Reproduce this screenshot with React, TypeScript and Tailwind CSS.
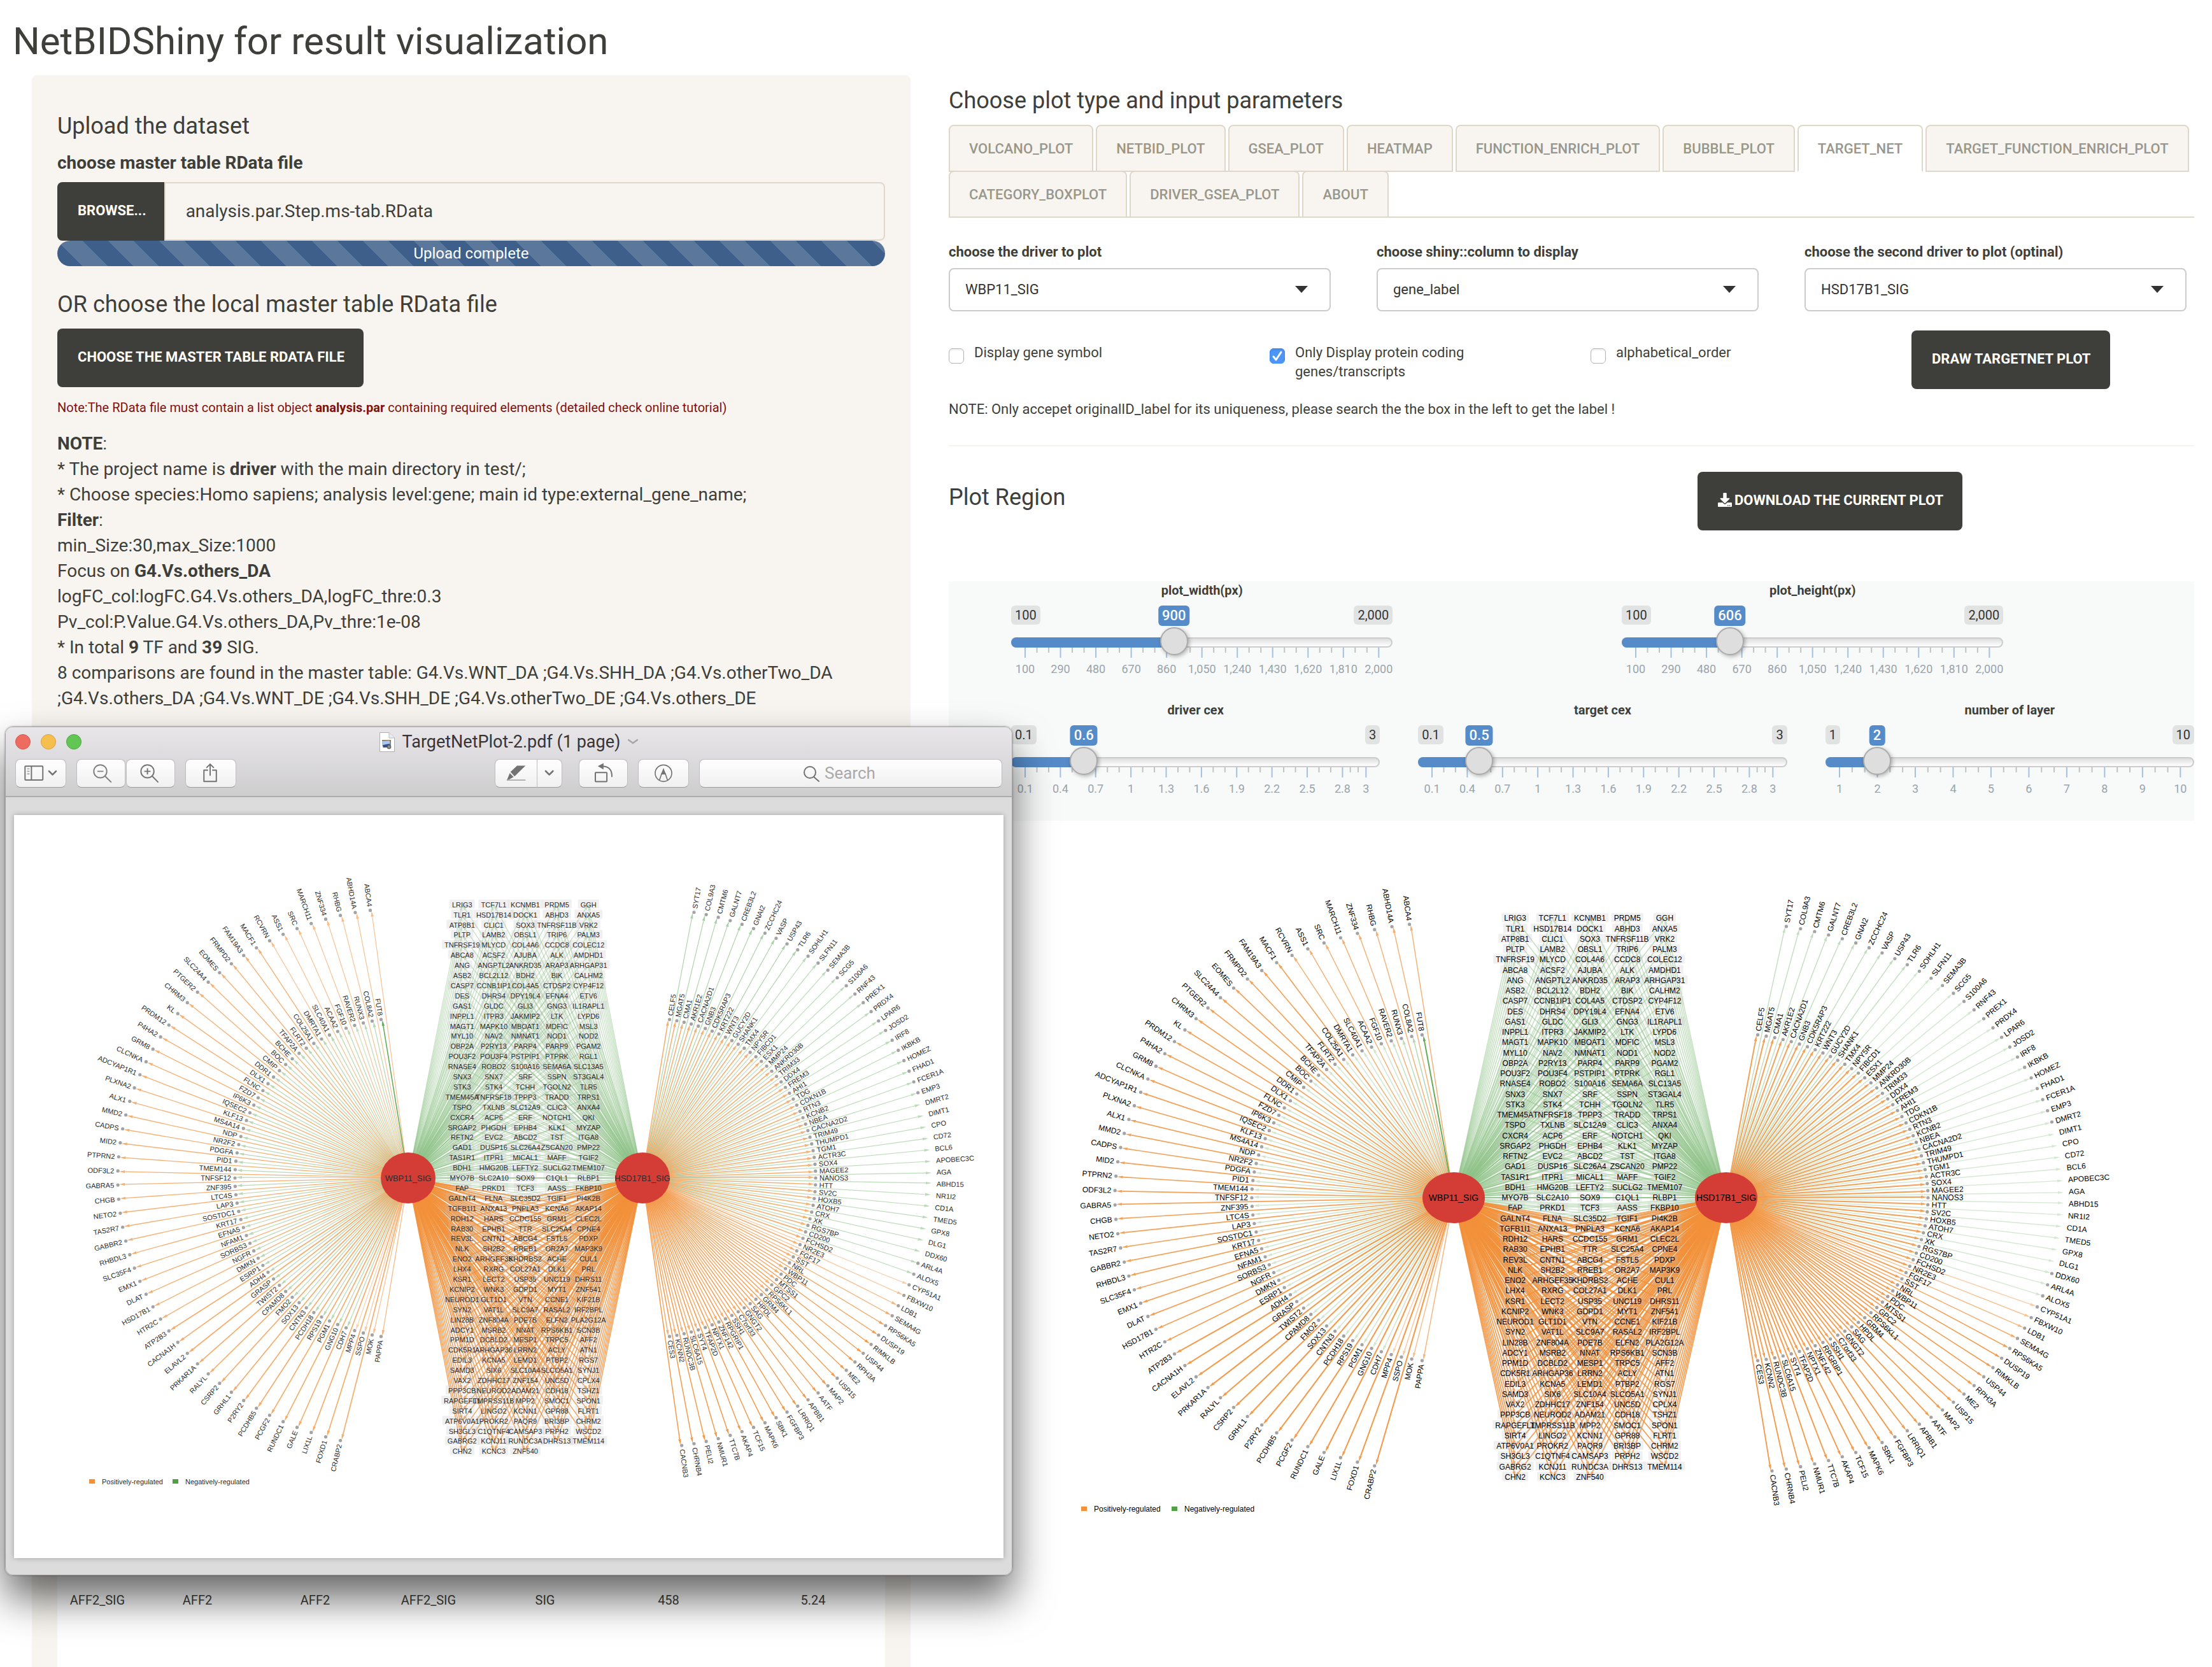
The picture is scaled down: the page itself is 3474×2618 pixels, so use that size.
import React from "react";
import { FaDownload } from "react-icons/fa";

/* ------------------------------------------------------------------ */
/* Network data                                                        */
/* ------------------------------------------------------------------ */

const leftOuter =
  "ABCA4 ABHD14A RHBG ZNF334 MARCH11 SRC ASS1 RCVRN MACF1 FAM19A3 FRMPD2 EOMES SLC24A4 PTGER2 CHRM3 KL PRDM12 P4HA2 GRM8 CLCNKA ADCYAP1R1 PLXNA2 ALX1 MMD2 CADPS MID2 PTPRN2 ODF3L2 GABRA5 CHGB NETO2 TAS2R7 GABBR2 RHBDL3 SLC35F4 EMX1 DLAT HSD17B1 HTR2C ATP2B3 CACNA1H ELAVL2 PRKAR1A RALYL CSRP2 GRHL1 P2RY2 PCDHB5 PCGF2 RUNDC1 GALE LIX1L FOXD1 CRABP2".split(" ");
const leftInner =
  "FUT8 COL8A2 RUNX3 RAVER2 FGF10 ACAA2 SLC40A1 DMRTA1 COL25A1 FLRT2 TFAP2A BCHE BOC CMIP DDR1 DLX1 FLNC FZD7 IP6K3 IQSEC2 KLF13 MS4A14 NDP NR2F2 PDGFA PID1 TMEM144 TNFSF12 ZNF395 LTC4S LAP3 SOSTDC1 KRT17 EFNA5 NFAM1 SORBS3 NGFR DMKN ESRP1 ADH4 GRASP TWIST2 CPAMD8 FMO2 SOX13 CNTN3 PCDH18 RPS19 PGM1 GNG10 CDH7 MPP4 SSPO MOK PAPPA".split(" ");
const rightInner =
  "CELF5 MGAT5 CMA1 AKR1E2 CACNA2D1 GNB3 CDK5RAP3 KRT222 WNT3 GUCY2D SHANK1 TMX4 NPY5R FIBCD1 ESX1 MMP24 ANKRD30B TRIM33 DDX4 FREM3 AHI1 TDG CDKN1B RTN3 KCNB2 NBEA CACNA2D2 TRIM49 THUMPD1 TGM1 ACTR3C SOX4 MAGEE2 NANOS3 HTT SV2C HOXB5 ATOH7 CRX XK RGS7BP CD200 FCHSD2 NR2E3 FGF17 SST NRL WBP11 PDC MTSS1 GPC2 RPS6KL1 GRM4 HPDL SAG GNGT2 C7orf33 SSH1 RPGRIP1 ZNF142 NPTX1 TFAP2D SYT4 SLC6A15 RUNDC3B KCNN2 CES3".split(" ");
const rightOuter =
  "SYT17 COL9A3 CMTM6 GALNT7 CREB3L2 GNAI2 ZCCHC24 VASP USP43 TLR6 SOHLH1 SLFN11 SEMA3B SCG5 S100A6 RNF43 PREX1 PRDX4 LPAR6 JOSD2 IRF8 IKBKB HOMEZ FHAD1 FCER1A EMP3 DMRT2 DIMT1 CPO CD72 BCL6 APOBEC3C AGA ABHD15 NR1I2 CD1A TMED5 GPX8 DLG1 DDX60 ARL4A ALOX5 CYP51A1 FBXW10 LDB1 SEMA4G RPS6KA5 DUSP19 RIMKLB USP44 RPH3A ME2 USP15 MAP2 AATF APBB1 LRRIQ1 FGFBP3 SBK1 MAPK6 TCF15 AKAP4 TTC7B NMUR1 PELI2 CHRNB4 CACNB3".split(" ");

const sharedRows = [
  "LRIG3 TCF7L1 KCNMB1 PRDM5 GGH",
  "TLR1 HSD17B14 DOCK1 ABHD3 ANXA5",
  "ATP8B1 CLIC1 SOX3 TNFRSF11B VRK2",
  "PLTP LAMB2 OBSL1 TRIP6 PALM3",
  "TNFRSF19 MLYCD COL4A6 CCDC8 COLEC12",
  "ABCA8 ACSF2 AJUBA ALK AMDHD1",
  "ANG ANGPTL2 ANKRD35 ARAP3 ARHGAP31",
  "ASB2 BCL2L12 BDH2 BIK CALHM2",
  "CASP7 CCNB1IP1 COL4A5 CTDSP2 CYP4F12",
  "DES DHRS4 DPY19L4 EFNA4 ETV6",
  "GAS1 GLDC GLI3 GNG3 IL1RAPL1",
  "INPPL1 ITPR3 JAKMIP2 LTK LYPD6",
  "MAGT1 MAPK10 MBOAT1 MDFIC MSL3",
  "MYL10 NAV2 NMNAT1 NOD1 NOD2",
  "OBP2A P2RY13 PARP4 PARP9 PGAM2",
  "POU3F2 POU3F4 PSTPIP1 PTPRK RGL1",
  "RNASE4 ROBO2 S100A16 SEMA6A SLC13A5",
  "SNX3 SNX7 SRF SSPN ST3GAL4",
  "STK3 STK4 TCHH TGOLN2 TLR5",
  "TMEM45A TNFRSF18 TPPP3 TRADD TRPS1",
  "TSPO TXLNB SLC12A9 CLIC3 ANXA4",
  "CXCR4 ACP6 ERF NOTCH1 QKI",
  "SRGAP2 PHGDH EPHB4 KLK1 MYZAP",
  "RFTN2 EVC2 ABCD2 TST ITGA8",
  "GAD1 DUSP16 SLC26A4 ZSCAN20 PMP22",
  "TAS1R1 ITPR1 MICAL1 MAFF TGIF2",
  "BDH1 HMG20B LEFTY2 SUCLG2 TMEM107",
  "MYO7B SLC2A10 SOX9 C1QL1 RLBP1",
  "FAP PRKD1 TCF3 AASS FKBP10",
  "GALNT4 FLNA SLC35D2 TGIF1 PI4K2B",
  "TGFB1I1 ANXA13 PNPLA3 KCNA6 AKAP14",
  "RDH12 HARS CCDC155 GRM1 CLEC2L",
  "RAB30 EPHB1 TTR SLC25A4 CPNE4",
  "REV3L CNTN1 ABCG4 FSTL5 PDXP",
  "NLK SH2B2 RREB1 OR2A7 MAP3K9",
  "ENO2 ARHGEF35 KHDRBS2 ACHE CUL1",
  "LHX4 RXRG COL27A1 DLK1 PRL",
  "KSR1 LECT2 USP35 UNC119 DHRS11",
  "KCNIP2 WNK3 GDPD1 MYT1 ZNF541",
  "NEUROD1 GLT1D1 VTN CCNE1 KIF21B",
  "SYN2 VAT1L SLC9A7 RASAL2 IRF2BPL",
  "LIN28B ZNF804A PDE7B ELFN2 PLA2G12A",
  "ADCY1 MSRB2 NNAT RPS6KB1 SCN3B",
  "PPM1D DCBLD2 MESP1 TRPC5 AFF2",
  "CDK5R1 ARHGAP36 LRRN2 ACLY ATN1",
  "EDIL3 KCNA5 LEMD1 PTBP2 RGS7",
  "SAMD3 SIX6 SLC10A4 SLCO5A1 SYNJ1",
  "VAX2 ZDHHC17 ZNF154 UNC5D CPLX4",
  "PPP3CB NEUROD2 ADAM21 CDH18 TSHZ1",
  "RAPGEFL1 TMPRSS11B MPP2 SMOC1 SPON1",
  "SIRT4 LINGO2 KCNN1 GPR88 FLRT1",
  "ATP6V0A1 PROKR2 PAQR9 BRI3BP CHRM2",
  "SH3GL3 C1QTNF4 CAMSAP3 PRPH2 WSCD2",
  "GABRG2 KCNJ11 RUNDC3A DHRS13 TMEM114",
  "CHN2 KCNC3 ZNF540",
].map((r) => r.split(" "));

/* ------------------------------------------------------------------ */
/* Target network chart                                                */
/* ------------------------------------------------------------------ */

type Geometry = {
  height: number;
  cx: number;
  cy: number;
  half: number;
  outer: [number, number];
  inner: [number, number];
  driver: [number, number];
  colStep: number;
  rowStep: number;
  font: number;
  driverFont: number;
  ink: string;
  stroke: number;
  ringAlpha: number;
  greenAlpha: number;
  hiddenDots: [number, number];
  legend: [number, number, number];
};

const ORANGE = "#f2913a";
const GREEN = "#8cc285";

const glyphWidth = (ch: string) => {
  if ("I".includes(ch)) return 0.278;
  if ("J".includes(ch)) return 0.5;
  if ("0123456789L".includes(ch)) return 0.556;
  if ("FTZ".includes(ch)) return 0.611;
  if ("ABEKPSVXY".includes(ch)) return 0.667;
  if ("CDHNRU".includes(ch)) return 0.722;
  if ("GOQ".includes(ch)) return 0.778;
  if ("M".includes(ch)) return 0.833;
  return 0.9;
};
const textWidth = (s: string, size: number) =>
  [...s].reduce((sum, ch) => sum + glyphWidth(ch), 0) * size;

function Edge(p: {
  x1: number;
  y1: number;
  x2: number;
  y2: number;
  color: string;
  width: number;
  alpha: number;
}) {
  const dx = p.x2 - p.x1;
  const dy = p.y2 - p.y1;
  const len = Math.hypot(dx, dy);
  const ux = dx / len;
  const uy = dy / len;
  const bx = p.x2 - ux * 9;
  const by = p.y2 - uy * 9;
  return (
    <g stroke={p.color} fill={p.color} opacity={p.alpha}>
      <line x1={p.x1} y1={p.y1} x2={bx} y2={by} strokeWidth={p.width} />
      <path
        stroke="none"
        d={`M${p.x2} ${p.y2}L${bx - uy * 2.2} ${by + ux * 2.2}L${bx + uy * 2.2} ${by - ux * 2.2}Z`}
      />
    </g>
  );
}

function TargetNet({ g, label }: { g: Geometry; label: string }) {
  const xl = g.cx - g.half;
  const xr = g.cx + g.half;
  const rad = Math.PI / 180;

  const ring = (
    names: string[],
    side: -1 | 1,
    radii: [number, number],
    start: number,
    step: number
  ) =>
    names.map((name, i) => {
      const t = start + step * i;
      const ox = side < 0 ? xl : xr;
      const x = ox + side * radii[0] * Math.sin(t * rad);
      const y = g.cy - radii[1] * Math.cos(t * rad);
      const tx = x + side * 6 * Math.sin(t * rad);
      const ty = y - 6 * Math.cos(t * rad);
      return { name, i, x, y, tx, ty, ox, side, rot: -side * (90 - t) };
    });

  const stepL = 162 / (leftInner.length - 1);
  const stepR = 162 / (rightInner.length - 1);
  const lo = ring(leftOuter, -1, g.outer, 9 - stepL / 2, stepL);
  const li = ring(leftInner, -1, g.inner, 9, stepL);
  const ri = ring(rightInner, 1, g.inner, 9, stepR);
  const ro = ring(rightOuter, 1, g.outer, 9 + stepR / 2, stepR);

  const cells = sharedRows.flatMap((row, r) =>
    row.map((name, c) => ({
      name,
      r,
      x: g.cx + (c - 2) * g.colStep,
      y: g.cy + (r - 27) * g.rowStep,
    }))
  );
  const shared = cells.flatMap((c) =>
    [xl, xr].map((ox) => {
      const slope = (c.y - g.cy) / Math.abs(c.x - ox);
      return { ...c, ox, green: slope < 0.16, faint: c.r > 27 };
    })
  );

  const ringEdge = (
    p: (typeof lo)[number],
    color: string,
    width: number,
    alpha: number
  ) => (
    <Edge
      key={p.name + p.i}
      x1={p.ox}
      y1={g.cy}
      x2={p.x - p.side * 2}
      y2={p.y + (p.y < g.cy ? 1 : -1)}
      color={color}
      width={width * g.stroke}
      alpha={alpha}
    />
  );

  return (
    <svg
      className="block w-full"
      style={{ height: g.height }}
      role="img"
      aria-label={label}
      fontFamily="'Liberation Sans', Arial, sans-serif"
    >
      <g>
        {li.map((p) =>
          p.i > 50
            ? ringEdge(p, ORANGE, 1.5, 0.3 + (p.i - 50) * 0.09)
            : p.i === 0
              ? ringEdge(p, "#55a54c", 2, 0.9)
              : ringEdge(p, "#7fbb78", 1.5, p.i < 4 ? 0.65 - p.i * 0.07 : g.greenAlpha)
        )}
        {ro.map((p) =>
          p.i < 42
            ? ringEdge(p, "#86bf80", 1.4, p.i < 10 ? g.greenAlpha + 0.15 : g.greenAlpha)
            : ringEdge(p, ORANGE, 1.4 + Math.min(0.5, (p.i - 42) * 0.03), Math.min(0.9, 0.45 + (p.i - 42) * 0.1))
        )}
        {lo.map((p) =>
          ringEdge(p, ORANGE, p.i > 38 ? 2.1 : p.i < 8 ? 1.4 : 1.7, p.i > 38 ? g.ringAlpha + 0.05 : g.ringAlpha - (p.i < 8 ? 0.12 : 0))
        )}
        {ri.map((p) => ringEdge(p, ORANGE, 2, g.ringAlpha))}
      </g>

      <g>
        {[...shared]
          .sort((a, b) => Number(b.green) - Number(a.green))
          .map((e, k) => (
            <Edge
              key={k}
              x1={e.ox}
              y1={g.cy}
              x2={e.x}
              y2={e.y}
              color={e.green ? GREEN : ORANGE}
              width={(e.green ? 1.5 : 1.8) * g.stroke}
              alpha={e.green ? (e.faint ? 0.35 : 0.5) : 0.85}
            />
          ))}
      </g>

      <g fill="#c0c0c0" fillOpacity="0.24">
        {cells.map((c) => {
          const w = textWidth(c.name, g.font) + 8;
          return (
            <rect key={c.name} x={c.x - w / 2} y={c.y - 8} width={w} height={14} />
          );
        })}
      </g>

      <g fill="#a3a3a3">
        {[...lo, ...li, ...ri].map((p) => (
          <circle key={p.name} cx={p.x} cy={p.y} r={2.6} />
        ))}
        {ro
          .filter((p) => p.i < g.hiddenDots[0] || p.i > g.hiddenDots[1])
          .map((p) => (
            <circle key={p.name} cx={p.x} cy={p.y} r={2.6} />
          ))}
      </g>

      <g fill="#d43d35">
        <ellipse cx={xl} cy={g.cy} rx={g.driver[0]} ry={g.driver[1]} />
        <ellipse cx={xr} cy={g.cy} rx={g.driver[0]} ry={g.driver[1]} />
      </g>

      <g fill={g.ink} fontSize={g.font}>
        {[...lo, ...li, ...ri, ...ro].map((p, k) => (
          <text
            key={k}
            textAnchor={p.side < 0 ? "end" : "start"}
            transform={`translate(${p.tx} ${p.ty}) rotate(${p.rot})`}
            y={4}
          >
            {p.name}
          </text>
        ))}
        {cells.map((c) => (
          <text key={c.name} x={c.x} y={c.y + 4} textAnchor="middle">
            {c.name}
          </text>
        ))}
        <rect x={g.legend[0]} y={g.legend[1] - 4} width={9} height={7} fill={ORANGE} />
        <text x={g.legend[0] + 20} y={g.legend[1] + 4}>
          Positively-regulated
        </text>
        <rect x={g.legend[2]} y={g.legend[1] - 4} width={9} height={7} fill="#52a046" />
        <text x={g.legend[2] + 20} y={g.legend[1] + 4}>
          Negatively-regulated
        </text>
      </g>
      <g fill={g.ink} fontSize={g.driverFont} textAnchor="middle">
        <text x={xl} y={g.cy + 5}>
          WBP11_SIG
        </text>
        <text x={xr} y={g.cy + 5}>
          HSD17B1_SIG
        </text>
      </g>
    </svg>
  );
}

const pageGeometry: Geometry = {
  height: 1200,
  cx: 1007,
  cy: 592,
  half: 214,
  outer: [532, 433],
  inner: [317, 259],
  driver: [49, 40],
  colStep: 58.7,
  rowStep: 16.25,
  font: 12,
  driverFont: 14,
  ink: "#000000",
  stroke: 1,
  ringAlpha: 0.85,
  greenAlpha: 0.35,
  hiddenDots: [27, 38],
  legend: [208, 1081, 350],
};

const pdfGeometry: Geometry = {
  height: 1167,
  cx: 803,
  cy: 570,
  half: 184,
  outer: [456, 424],
  inner: [272, 252],
  driver: [43, 40],
  colStep: 49.6,
  rowStep: 15.9,
  font: 11,
  driverFont: 13,
  ink: "#2c2c2c",
  stroke: 0.8,
  ringAlpha: 0.7,
  greenAlpha: 0.55,
  hiddenDots: [26, 39],
  legend: [118, 1047, 249],
};

/* ------------------------------------------------------------------ */
/* Form controls                                                       */
/* ------------------------------------------------------------------ */

function DarkButton({ children }: { children: React.ReactNode }) {
  return (
    <button
      type="button"
      className="inline-flex h-[92px] items-center gap-1 rounded-lg bg-[#3e3f3a] pr-[30px] pb-1 pl-8 text-[22px] font-bold whitespace-nowrap text-white uppercase"
    >
      {children}
    </button>
  );
}

function SelectField({ id, label, value }: { id: string; label: string; value: string }) {
  return (
    <div>
      <label htmlFor={id} className="mb-[9px] block text-[22px] leading-8 font-bold">
        {label}
      </label>
      <div className="relative">
        <select
          id={id}
          defaultValue={value}
          className="block h-[68px] w-full appearance-none rounded-lg border-2 border-[#cccccc] bg-white px-6 pb-0.5 text-[22px] text-[#333333]"
        >
          <option>{value}</option>
        </select>
        <svg
          className="pointer-events-none absolute top-7 right-9 h-[11px] w-5"
          viewBox="0 0 20 11"
          aria-hidden="true"
        >
          <path d="M0 0H20L10 11Z" fill="#333333" />
        </svg>
      </div>
    </div>
  );
}

function CheckField({ id, label, checked }: { id: string; label: string; checked?: boolean }) {
  return (
    <div className="mt-5 flex items-start gap-4">
      <span className="relative mt-2 block size-6 shrink-0">
        <input
          id={id}
          type="checkbox"
          defaultChecked={checked}
          className="peer block size-6 appearance-none rounded-md border border-[#b4b4b4] bg-white shadow-[inset_0_2px_2px_rgba(0,0,0,0.08)] checked:border-[#3f8cf5] checked:bg-[#4c96f8]"
        />
        <svg
          className="pointer-events-none absolute inset-0 hidden size-6 peer-checked:block"
          viewBox="0 0 24 24"
          aria-hidden="true"
        >
          <path
            d="M6 13L10 18L18 6"
            fill="none"
            stroke="white"
            strokeWidth="3"
            strokeLinecap="round"
            strokeLinejoin="round"
          />
        </svg>
      </span>
      <label htmlFor={id} className="text-[22px] leading-[30px]">
        {label}
      </label>
    </div>
  );
}

function SliderField(p: {
  id: string;
  label: string;
  min: number;
  max: number;
  value: number;
  step: number;
  ticks: number[];
}) {
  const pct = (v: number) => ((v - p.min) / (p.max - p.min)) * 100;
  const fmt = (v: number) => v.toLocaleString("en-US");
  const at = `calc(22px + (100% - 44px) * ${pct(p.value) / 100})`;
  const minor = p.ticks.slice(1).flatMap((t, i) => {
    const a = p.ticks[i];
    return [a + (t - a) / 3, a + ((t - a) * 2) / 3];
  });
  return (
    <div>
      <label htmlFor={p.id} className="block text-center text-[20px] leading-7 font-bold">
        {p.label}
      </label>
      <div className="relative mt-2.5 flex h-[34px] items-start justify-between text-[20px] text-[#333333]">
        <span className="rounded-md bg-[#e1e3e2] px-1.5 leading-[30px]">{fmt(p.min)}</span>
        <span className="rounded-md bg-[#e1e3e2] px-1.5 leading-[30px]">{fmt(p.max)}</span>
        <output
          htmlFor={p.id}
          className="absolute top-0 -translate-x-1/2 rounded-md bg-[#548bc8] px-1.5 text-[22px] leading-8 font-medium text-white"
          style={{ left: at }}
        >
          {fmt(p.value)}
        </output>
      </div>
      <div className="relative h-11 pt-4">
        <div className="h-4 overflow-hidden rounded-lg border-2 border-[#cccccc] bg-linear-to-b from-[#dedede] to-white" />
        <div
          className="absolute top-4 left-0 h-4 rounded-l-lg bg-[#548bc8]"
          style={{ width: at }}
        />
        <input
          id={p.id}
          type="range"
          min={p.min}
          max={p.max}
          step={p.step}
          defaultValue={p.value}
          className="absolute inset-0 block h-11 w-full appearance-none bg-transparent [&::-webkit-slider-thumb]:size-11 [&::-webkit-slider-thumb]:appearance-none [&::-webkit-slider-thumb]:rounded-full [&::-webkit-slider-thumb]:border-2 [&::-webkit-slider-thumb]:border-[#ababab] [&::-webkit-slider-thumb]:bg-[#dedede] [&::-webkit-slider-thumb]:shadow-[2px_2px_6px_rgba(0,0,0,0.3)]"
        />
      </div>
      <div className="-mt-3 px-[22px]">
        <svg className="block h-12 w-full overflow-visible text-[18px]" aria-hidden="true">
          {minor.map((v) => (
            <line key={v} x1={`${pct(v)}%`} x2={`${pct(v)}%`} y1="0" y2="8" stroke="#bfc3c5" strokeWidth="2" />
          ))}
          {p.ticks.map((v) => (
            <line key={v} x1={`${pct(v)}%`} x2={`${pct(v)}%`} y1="0" y2="16" stroke="#a3c1e0" strokeWidth="2" />
          ))}
          {p.ticks.map((v) => (
            <text key={v} x={`${pct(v)}%`} y="40" textAnchor="middle" fill="#99a4ac">
              {fmt(v)}
            </text>
          ))}
        </svg>
      </div>
    </div>
  );
}

/* ------------------------------------------------------------------ */
/* Left panel                                                          */
/* ------------------------------------------------------------------ */

function UploadPanel() {
  return (
    <section className="flex flex-col rounded-t-lg bg-[#f8f5f0] px-10 pt-[60px]">
      <h2 className="text-[36px] leading-10">Upload the dataset</h2>
      <label htmlFor="file-name" className="mt-[18px] mb-2.5 text-[28px] leading-10 font-bold">
        choose master table RData file
      </label>
      <div className="flex h-[92px]">
        <button
          type="button"
          className="rounded-l-lg bg-[#3e3f3a] pr-7 pb-1 pl-8 text-[22px] font-bold text-white uppercase"
        >
          Browse...
        </button>
        <input
          id="file-name"
          type="text"
          readOnly
          value="analysis.par.Step.ms-tab.RData"
          className="min-w-0 grow rounded-r-lg border-2 border-[#dfd7ca] bg-transparent px-8 text-[28px]"
        />
      </div>
      <div className="h-10 rounded-full bg-[#3e5f8a] bg-[linear-gradient(45deg,rgba(255,255,255,0.15)_25%,transparent_25%,transparent_50%,rgba(255,255,255,0.15)_50%,rgba(255,255,255,0.15)_75%,transparent_75%,transparent)] bg-size-[80px_80px] text-center text-[24px] leading-10 text-white">
        Upload complete
      </div>

      <h2 className="mt-10 mb-[18px] text-[36px] leading-10">
        OR choose the local master table RData file
      </h2>
      <div>
        <DarkButton>Choose the master table RData file</DarkButton>
      </div>
      <p className="mt-[18px] text-[20px] leading-7 text-[#80100c]">
        Note:The RData file must contain a list object <b>analysis.par</b> containing required
        elements (detailed check online tutorial)
      </p>

      <div className="mt-[23px] text-[28px] leading-10">
        <p>
          <b>NOTE</b>:
        </p>
        <p>
          * The project name is <b>driver</b> with the main directory in test/;
        </p>
        <p>* Choose species:Homo sapiens; analysis level:gene; main id type:external_gene_name;</p>
        <p>
          <b>Filter</b>:
        </p>
        <p>min_Size:30,max_Size:1000</p>
        <p>
          Focus on <b>G4.Vs.others_DA</b>
        </p>
        <p>logFC_col:logFC.G4.Vs.others_DA,logFC_thre:0.3</p>
        <p>Pv_col:P.Value.G4.Vs.others_DA,Pv_thre:1e-08</p>
        <p>
          * In total <b>9</b> TF and <b>39</b> SIG.
        </p>
        <p>
          8 comparisons are found in the master table: G4.Vs.WNT_DA ;G4.Vs.SHH_DA
          ;G4.Vs.otherTwo_DA ;G4.Vs.others_DA ;G4.Vs.WNT_DE ;G4.Vs.SHH_DE ;G4.Vs.otherTwo_DE
          ;G4.Vs.others_DE
        </p>
      </div>

      <div className="mt-10 flex grow flex-col justify-end bg-white pb-[85px]">
        <table className="w-full table-fixed text-center text-[20px] leading-10">
          <colgroup>
            <col className="w-[126px]" />
            <col className="w-[188px]" />
            <col className="w-[182px]" />
            <col className="w-[174px]" />
            <col className="w-[192px]" />
            <col className="w-[196px]" />
            <col />
          </colgroup>
          <tbody>
            <tr>
              <td>AFF2_SIG</td>
              <td>AFF2</td>
              <td>AFF2</td>
              <td>AFF2_SIG</td>
              <td>SIG</td>
              <td>458</td>
              <td className="pl-4">5.24</td>
            </tr>
          </tbody>
        </table>
      </div>
    </section>
  );
}

/* ------------------------------------------------------------------ */
/* Right panel                                                         */
/* ------------------------------------------------------------------ */

const tabs = [
  "VOLCANO_PLOT",
  "NETBID_PLOT",
  "GSEA_PLOT",
  "HEATMAP",
  "FUNCTION_ENRICH_PLOT",
  "BUBBLE_PLOT",
  "TARGET_NET",
  "TARGET_FUNCTION_ENRICH_PLOT",
  "CATEGORY_BOXPLOT",
  "DRIVER_GSEA_PLOT",
  "ABOUT",
];

const pxTicks = [100, 290, 480, 670, 860, 1050, 1240, 1430, 1620, 1810, 2000];
const cexTicks = [0.1, 0.4, 0.7, 1, 1.3, 1.6, 1.9, 2.2, 2.5, 2.8, 3];
const layerTicks = [1, 2, 3, 4, 5, 6, 7, 8, 9, 10];

function PlotPanel() {
  return (
    <section className="min-w-0 pt-5">
      <h2 className="mb-[18px] text-[36px] leading-10">Choose plot type and input parameters</h2>
      <nav className="flex flex-wrap gap-x-1 border-b-2 border-[#dfd7ca]">
        {tabs.map((t) => (
          <a
            key={t}
            href={`#${t.toLowerCase()}`}
            aria-current={t === "TARGET_NET" ? "page" : undefined}
            className={
              t === "TARGET_NET"
                ? "-mb-0.5 flex h-[74px] items-center rounded-t-lg border-2 border-[#dfd7ca] border-b-white bg-white px-[30px] text-[22px] font-medium text-[#98978b]"
                : "-mb-0.5 flex h-[74px] items-center rounded-t-lg border-2 border-[#dfd7ca] bg-[#f8f5f0] px-[30px] text-[22px] font-medium text-[#98978b]"
            }
          >
            {t}
          </a>
        ))}
      </nav>

      <div className="mt-[38px] mr-3 grid grid-cols-3 gap-[72px]">
        <SelectField id="driver-one" label="choose the driver to plot" value="WBP11_SIG" />
        <SelectField id="column" label="choose shiny::column to display" value="gene_label" />
        <SelectField
          id="driver-two"
          label="choose the second driver to plot (optinal)"
          value="HSD17B1_SIG"
        />
      </div>
      <div className="mt-[30px] mr-3 grid grid-cols-4 gap-[72px]">
        <CheckField id="show-symbol" label="Display gene symbol" />
        <CheckField
          id="coding-only"
          label="Only Display protein coding genes/transcripts"
          checked
        />
        <CheckField id="alphabetical" label="alphabetical_order" />
        <div>
          <DarkButton>Draw targetNet plot</DarkButton>
        </div>
      </div>
      <p className="mt-4 text-[22px] leading-8">
        NOTE: Only accepet originalID_label for its uniqueness, please search the the box in the
        left to get the label !
      </p>
      <hr className="mt-10 border-t-2 border-[#f8f5f0]" />

      <div className="mt-10 grid grid-cols-[1176fr_780fr]">
        <h2 className="mt-5 text-[36px] leading-10">Plot Region</h2>
        <div>
          <DarkButton>
            <FaDownload className="size-[22px]" aria-hidden="true" />
            Download the current plot
          </DarkButton>
        </div>
      </div>

      <div className="mt-20 flex flex-col gap-9 bg-[#f8faf9] pb-9 pl-[98px]">
        <div className="grid grid-cols-2 gap-[60px]">
          <div className="w-2/3">
            <SliderField id="plot-width" label="plot_width(px)" min={100} max={2000} value={900} step={1} ticks={pxTicks} />
          </div>
          <div className="w-2/3">
            <SliderField id="plot-height" label="plot_height(px)" min={100} max={2000} value={606} step={1} ticks={pxTicks} />
          </div>
        </div>
        <div className="grid grid-cols-3 gap-[60px]">
          <SliderField id="driver-cex" label="driver cex" min={0.1} max={3} value={0.6} step={0.1} ticks={cexTicks} />
          <SliderField id="target-cex" label="target cex" min={0.1} max={3} value={0.5} step={0.1} ticks={cexTicks} />
          <SliderField id="layers" label="number of layer" min={1} max={10} value={2} step={1} ticks={layerTicks} />
        </div>
      </div>

      <TargetNet g={pageGeometry} label="Target network of WBP11_SIG and HSD17B1_SIG" />
    </section>
  );
}

/* ------------------------------------------------------------------ */
/* PDF viewer window                                                   */
/* ------------------------------------------------------------------ */

const toolButton =
  "flex h-[45px] items-center justify-center border border-[#bfbdbf] border-b-[#9f9d9f] bg-linear-to-b from-white to-[#f0f0f0]";

function PdfWindow() {
  return (
    <div className="absolute top-[1141px] left-2 w-[1582px] overflow-hidden rounded-xl border border-[#a5a5a5] bg-[#dcdcdc]">
      <header className="h-[110px] border-b-2 border-[#adabad] bg-linear-to-b from-[#e8e6e9] to-[#cecdce]">
        <div className="mb-1 grid h-[46px] grid-cols-[1fr_auto_1fr] items-center px-[15px]">
          <div className="flex gap-4">
            <button type="button" aria-label="Close" className="size-6 rounded-full border border-[#d3584e] bg-[#ee6b60]" />
            <button type="button" aria-label="Minimize" className="size-6 rounded-full border border-[#d9a23f] bg-[#f5bf4f]" />
            <button type="button" aria-label="Zoom" className="size-6 rounded-full border border-[#4aa83f] bg-[#61c654]" />
          </div>
          <h2 className="flex items-center text-[27px] leading-8 text-[#363436]">
            <svg className="mr-3 h-[31px] w-6" viewBox="0 0 24 31" aria-hidden="true">
              <path d="M0.5 0.5H15L23.5 9V30.5H0.5Z" fill="#ffffff" stroke="#b0b0b0" />
              <path d="M15 0.5V9H23.5" fill="#ececec" stroke="#b8b8b8" />
              <path d="M4 12H18V24H5Z" fill="#8f7a52" />
              <path d="M4 14L16 13L17 22L5 24Z" fill="#a9c6f2" />
              <path d="M5 20L16 18L17 23L6 24Z" fill="#2f4f86" />
              <circle cx="15" cy="23" r="3" fill="#8a8a8a" stroke="#555555" />
            </svg>
            TargetNetPlot-2.pdf (1 page)
            <svg className="ml-3 h-[10px] w-4" viewBox="0 0 16 10" aria-hidden="true">
              <path d="M1 2L8 7L15 2" fill="none" stroke="#a8a6a8" strokeWidth="2.5" strokeLinecap="round" />
            </svg>
          </h2>
          <span />
        </div>
        <div className="flex items-start px-[15px]">
          <button type="button" aria-label="Sidebar" className={`${toolButton} w-20 rounded-lg`}>
            <svg className="h-[45px] w-20" viewBox="72 155 240 135" fill="none" stroke="#727272">
              <rect x="116" y="188" width="86" height="67" rx="3" strokeWidth="6" />
              <path d="M147 188V255" strokeWidth="6" />
              <path d="M126 201H138M126 213H138M126 225H138" stroke="#a0a0a0" strokeWidth="5" />
              <path d="M232 212L249 229L266 212" strokeWidth="8" strokeLinecap="round" strokeLinejoin="round" />
            </svg>
          </button>
          <button type="button" aria-label="Zoom out" className={`${toolButton} ml-4 w-[77px] rounded-lg`}>
            <svg className="h-[45px] w-[76px]" viewBox="360 155 228 135" fill="none" stroke="#808080" strokeWidth="6">
              <circle cx="471" cy="213" r="31" />
              <path d="M457 213H486" />
              <path d="M494 236L522 264" strokeLinecap="round" />
            </svg>
          </button>
          <button type="button" aria-label="Zoom in" className={`${toolButton} ml-px w-[77px] rounded-lg`}>
            <svg className="h-[45px] w-[76px]" viewBox="594 155 228 135" fill="none" stroke="#757575" strokeWidth="6">
              <circle cx="693" cy="213" r="31" />
              <path d="M678 213H708M693 198V228" />
              <path d="M716 236L743 264" strokeLinecap="round" />
            </svg>
          </button>
          <button type="button" aria-label="Share" className={`${toolButton} ml-4 w-20 rounded-lg`}>
            <svg className="h-[45px] w-20" viewBox="870 155 240 135" fill="none" stroke="#727272" strokeWidth="6">
              <path d="M977 207H957V262H1017V207H997" strokeLinejoin="round" />
              <path d="M987 180V234" />
              <path d="M969 196L987 178L1005 196" />
            </svg>
          </button>
          <div className="ml-auto flex">
            <button type="button" aria-label="Highlight" className={`${toolButton} w-[67px] rounded-l-lg`}>
              <svg className="h-[45px] w-[66px]" viewBox="594 155 198 135">
                <path d="M698 186H738L686 237L666 216Z" fill="#727272" />
                <path d="M663 221L681 240L670 246L648 258Z" fill="#727272" />
                <path d="M648 255H738" stroke="#a8a8a8" strokeWidth="5" />
              </svg>
            </button>
            <button type="button" aria-label="Highlight colours" className={`${toolButton} -ml-px w-10 rounded-r-lg`}>
              <svg className="h-[45px] w-9" viewBox="796 155 108 135" fill="none" stroke="#727272">
                <path d="M832 212L849 229L866 212" strokeWidth="8" strokeLinecap="round" strokeLinejoin="round" />
              </svg>
            </button>
          </div>
          <button type="button" aria-label="Rotate" className={`${toolButton} ml-[26px] w-[77px] rounded-lg`}>
            <svg className="h-[45px] w-[76px]" viewBox="989 155 228 135" fill="none" stroke="#727272" strokeWidth="6">
              <rect x="1065" y="219" width="55" height="43" rx="2" />
              <path d="M1100 189Q1146 190 1144 240" />
              <path d="M1077 188L1104 174V204Z" fill="#727272" stroke="none" />
            </svg>
          </button>
          <button type="button" aria-label="Markup" className={`${toolButton} ml-4 w-20 rounded-lg`}>
            <svg className="h-[45px] w-20" viewBox="1266 155 240 135" fill="none" stroke="#727272" strokeWidth="5">
              <circle cx="1386" cy="222" r="40" />
              <path d="M1386 196L1398 228H1374Z" fill="#727272" stroke="none" />
              <path d="M1378 222L1366 257M1394 222L1406 257" />
            </svg>
          </button>
          <label className="ml-4 flex h-[45px] w-[476px] items-center rounded-lg border border-[#bfbdbf] border-b-[#9f9d9f] bg-linear-to-b from-white to-[#f0f0f0] pl-[162px]">
            <svg className="mr-2 size-[26px] shrink-0" viewBox="0 0 26 26" fill="none" stroke="#727272" strokeWidth="2">
              <circle cx="11" cy="11" r="9" />
              <path d="M17 18L25 25" strokeLinecap="round" />
            </svg>
            <input
              type="search"
              aria-label="Search"
              placeholder="Search"
              className="w-full min-w-0 bg-transparent text-[26px] placeholder:text-[#a9a9a9]"
            />
          </label>
        </div>
      </header>
      <div className="px-[13px] pt-7 pb-[26px]">
        <div className="bg-white shadow-[0_0_8px_rgba(0,0,0,0.28)]">
          <TargetNet g={pdfGeometry} label="Exported target network" />
        </div>
      </div>
    </div>
  );
}

export default function App() {
  return (
    <div className="relative flex min-h-screen flex-col overflow-hidden bg-white font-['Roboto',sans-serif] text-[#3e3f3a]">
      <h1 className="px-5 pt-8 pb-5 text-[60px] leading-[66px]">
        NetBIDShiny for result visualization
      </h1>
      <main className="grid grow grid-cols-[1380fr_1956fr] gap-[60px] pr-7 pl-[50px]">
        <UploadPanel />
        <PlotPanel />
      </main>
      <div className="pointer-events-none absolute top-[1141px] left-2 h-[1333px] w-[1582px] rounded-xl shadow-[0_36px_64px_rgba(0,0,0,0.6),0_0_3px_rgba(0,0,0,0.4)]" />
      <PdfWindow />
    </div>
  );
}
